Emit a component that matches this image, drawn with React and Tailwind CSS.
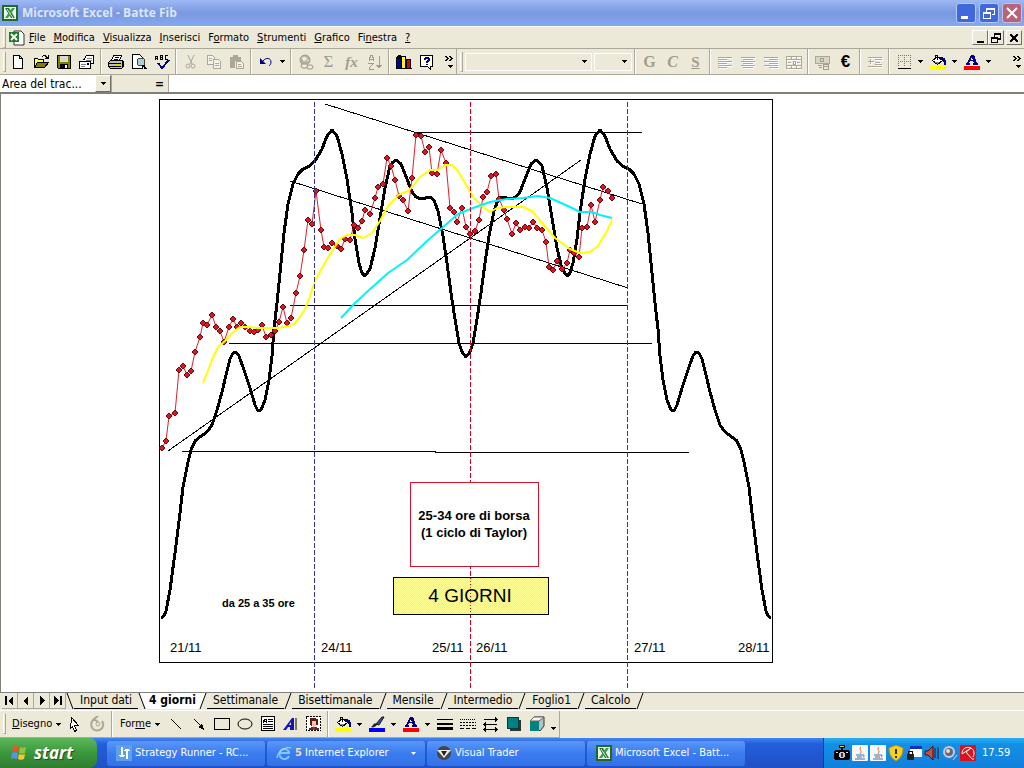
import { clsx } from "clsx";

const MENUS = [
  ["", "F", "ile"],
  ["", "M", "odifica"],
  ["", "V", "isualizza"],
  ["", "I", "nserisci"],
  ["F", "o", "rmato"],
  ["", "S", "trumenti"],
  ["", "G", "rafico"],
  ["Fi", "n", "estra"],
  ["", "?", ""],
];

const SHEETS = ["Input dati", "4 giorni", "Settimanale", "Bisettimanale", "Mensile", "Intermedio", "Foglio1", "Calcolo"];

// Left half of the theoretical cycle; the right half mirrors it
const CYCLE = [
  [161, 618], [164, 616], [166, 611], [170, 590], [175, 553], [180, 513], [183, 487], [188, 462], [191, 450], [195, 441],
  [200, 437], [207, 432], [212, 425], [217, 410], [222, 392], [226, 375], [230, 359], [233, 353], [236, 352], [239, 356],
  [243, 367], [250, 388], [255, 405], [258, 411], [261, 410], [265, 400], [269, 380], [272, 356], [274, 329], [277, 303],
  [280, 273], [284, 233], [288, 204], [293, 184], [298, 174], [303, 169], [308, 167], [315, 161], [322, 149], [327, 136],
  [332, 130], [337, 136], [342, 154], [347, 179], [352, 213], [355, 239], [359, 263], [362, 273], [365, 276], [370, 269],
  [375, 248], [380, 218], [385, 188], [390, 166], [393, 162], [396, 160], [401, 164], [407, 179], [412, 192], [416, 197],
  [421, 199], [430, 197], [434, 200], [438, 211], [443, 236], [447, 263], [451, 293], [455, 319], [459, 343], [462, 352],
  [466, 357],
];

const PRICES = [
  [162, 448], [166, 441], [169, 416], [175, 413], [179, 370], [183, 366], [187, 375], [191, 371], [195, 352], [200, 337],
  [203, 323], [207, 325], [212, 315], [216, 327], [220, 331], [224, 342], [229, 327], [233, 319], [237, 327], [241, 323],
  [245, 327], [250, 331], [254, 332], [258, 330], [262, 325], [266, 337], [271, 335], [275, 331], [279, 322], [283, 307],
  [287, 323], [291, 318], [296, 293], [300, 276], [304, 250], [308, 220], [312, 224], [316, 191], [321, 230], [324, 247],
  [328, 248], [332, 243], [337, 246], [341, 249], [345, 239], [350, 240], [354, 225], [358, 228], [362, 221], [365, 210],
  [370, 214], [375, 198], [378, 187], [383, 184], [387, 158], [391, 166], [395, 180], [399, 196], [403, 200], [408, 211],
  [412, 178], [416, 135], [421, 136], [425, 152], [429, 147], [432, 173], [437, 174], [441, 150], [446, 163], [450, 208],
  [454, 212], [457, 222], [462, 208], [466, 227], [470, 234], [475, 231], [479, 220], [483, 197], [487, 192], [491, 176],
  [496, 174], [499, 199], [504, 210], [507, 219], [512, 234], [516, 223], [520, 230], [525, 227], [529, 228], [533, 222],
  [537, 228], [542, 230], [546, 242], [549, 267], [553, 270], [557, 261], [562, 269], [567, 263], [570, 250], [574, 253],
  [579, 257], [582, 228], [587, 227], [591, 205], [595, 222], [600, 200], [603, 187], [608, 191], [612, 198],
];

const FAST_AVERAGE = [
  [203, 383], [207, 373], [212, 360], [218, 347], [225, 341], [233, 332], [240, 327], [248, 327], [258, 328], [278, 328],
  [290, 326], [295, 323], [300, 317], [305, 309], [310, 296], [315, 281], [322, 268], [332, 251], [340, 239], [347, 235],
  [355, 235], [363, 238], [372, 233], [380, 221], [388, 206], [395, 199], [398, 195], [408, 191], [413, 186], [420, 177],
  [430, 170], [438, 170], [445, 165], [452, 165], [458, 171], [465, 183], [473, 197], [482, 206], [490, 212], [497, 208],
  [507, 207], [523, 207], [532, 211], [543, 224], [555, 238], [570, 249], [580, 253], [590, 252], [598, 246], [607, 231],
  [612, 220],
];

const SLOW_AVERAGE = [
  [341, 318], [355, 303], [368, 291], [388, 273], [407, 260], [427, 241], [442, 228], [458, 214], [473, 208], [490, 202],
  [507, 199], [523, 198], [538, 196], [550, 198], [570, 207], [580, 212], [592, 212], [600, 215], [612, 218],
];

const toPoints = (list) => list.map((p) => p.join(",")).join(" ");
const mirrored = [...CYCLE].reverse().map(([x, y]) => [932 - x, y]);

const Icon = ({ children, smooth, size = 16 }) => (
  <svg width={size} height={size} viewBox="0 0 16 16" fill="none" aria-hidden="true"
    shapeRendering={smooth ? "auto" : "crispEdges"} className="block shrink-0">
    {children}
  </svg>
);

const Tool = ({ label, children }) => (
  <button type="button" aria-label={label} className="flex h-[22px] w-[23px] shrink-0 items-center justify-center">
    {children}
  </button>
);

const Caret = () => (
  <svg width="5" height="3" viewBox="0 0 5 3" shapeRendering="crispEdges" aria-hidden="true" className="block">
    <path d="M0 0h5v1H0zM1 1h3v1H1zM2 2h1v1H2z" fill="#000" />
  </svg>
);

const Drop = ({ label }) => (
  <button type="button" aria-label={label} className="flex h-[22px] w-[11px] shrink-0 items-center justify-center">
    <Caret />
  </button>
);

const Sep = () => (
  <div className="flex h-full w-[6px] shrink-0 justify-center">
    <div className="w-px bg-[#aca899]" />
    <div className="w-px bg-white" />
  </div>
);

const Grip = () => (
  <div className="flex h-full w-[6px] shrink-0 items-center justify-end">
    <div className="h-5 w-[3px] border-r border-b border-[#aca899] border-l border-l-white" />
  </div>
);

const Chevrons = () => (
  <button type="button" aria-label="Altri pulsanti" className="flex h-full w-[18px] shrink-0 flex-col items-end justify-center gap-1 pr-[3px]">
    <svg width="8" height="5" viewBox="0 0 8 5" shapeRendering="crispEdges" aria-hidden="true">
      <path d="M0 0h2v1H0zM1 1h2v1H1zM2 2h2v1H2zM1 3h2v1H1zM0 4h2v1H0zM4 0h2v1H4zM5 1h2v1H5zM6 2h2v1H6zM5 3h2v1H5zM4 4h2v1H4z" fill="#000" />
    </svg>
    <Caret />
  </button>
);

const ExcelIcon = () => (
  <Icon smooth>
    <rect x="0" y="0" width="16" height="16" fill="#1d6b26" />
    <rect x="2" y="2" width="12" height="12" fill="#f2f8f0" />
    <path d="M3 3h4l6 10H9z" fill="#1d7a2c" />
    <path d="M13 3h-3L3 13h3z" fill="#3f9a4a" />
    <path d="M5 4l6 9" stroke="#d8ecd8" />
  </Icon>
);

const BucketIcon = ({ color }) => (
  <Icon>
    <path d="M2.500 6.500l5-4 5 4-5 4z" fill="#fff" stroke="#000" />
    <path d="M5 8h4v1H8v1H7V9H5z" fill="#8a8a80" />
    <path d="M5.500 5V1.500h2V6" stroke="#000" />
    <path d="M10 3h3v1h2v2h1v5h-2V8h-1V6h-2V5h-1z" fill="#000080" />
    <rect x="0" y="12" width="16" height="4" fill={color} />
  </Icon>
);

const FontColorIcon = () => (
  <Icon>
    <path d="M7 1h3l3 8h1v2h-5V9h1l-1-2H6L5 9h1v2H2V9h1zM8 3L7 6h2z" fill="#000080" />
    <rect x="0" y="12" width="16" height="4" fill="#ff0000" />
  </Icon>
);

const AlignIcon = ({ d }) => (
  <Icon>
    <path d={d} stroke="#fff" transform="translate(1 1)" />
    <path d={d} stroke="#aca899" />
  </Icon>
);

const TitleBar = () => (
  <header className="flex h-[26px] items-center bg-linear-to-b from-[#9db9f4] via-[#7b97e0] to-[#82aaf0] pr-[2px] pl-[2px]">
    <ExcelIcon />
    <h1 className="ml-1 flex-1 font-['Open_Sans',sans-serif] text-[12px] leading-4 font-bold text-[#dbe6fa]">Microsoft Excel - Batte Fib</h1>
    <div className="flex gap-[3px]">
      <button type="button" aria-label="Riduci a icona" className="flex size-5 items-center justify-center rounded-[3px] border border-[#b5c8f2] bg-[#3f68dc]">
        <Icon><rect x="3" y="11" width="7" height="3" fill="#fff" /></Icon>
      </button>
      <button type="button" aria-label="Ripristina" className="flex size-5 items-center justify-center rounded-[3px] border border-[#b5c8f2] bg-[#3f68dc]">
        <Icon>
          <path d="M5 3h9v7h-3V9h2V5H6v2H5z" fill="#fff" />
          <path d="M2 7h8v7H2zM3 9v4h6V9z" fill="#fff" fillRule="evenodd" />
        </Icon>
      </button>
      <button type="button" aria-label="Chiudi" className="flex size-5 items-center justify-center rounded-[3px] border border-[#c9bfe0] bg-[#b8637c]">
        <Icon smooth><path d="M3 3l10 10M13 3L3 13" stroke="#fff" strokeWidth="2" /></Icon>
      </button>
    </div>
  </header>
);

const MenuBar = () => (
  <nav className="flex h-[23px] items-center border-t border-b border-t-white border-b-[#aca899]">
    <Grip />
    <div className="ml-[2px] flex w-[17px] justify-center">
      <Icon smooth>
        <path d="M5 1h7l3 3v11H5z" fill="#fff" stroke="#333" />
        <rect x="0" y="2" width="10" height="10" fill="#1d7a2c" />
        <path d="M2 4l6 6M8 4l-6 6" stroke="#fff" strokeWidth="2" />
      </Icon>
    </div>
    <ul className="flex flex-1 gap-2 pl-1 text-[11px] leading-4">
      {MENUS.map(([before, key, after]) => (
        <li key={before + key + after}>
          <button type="button">{before}<span className="underline underline-offset-1">{key}</span>{after}</button>
        </li>
      ))}
    </ul>
    <div className="flex pr-[2px]">
      <button type="button" aria-label="Riduci finestra" className="flex h-[15px] w-4 items-center justify-center border border-white border-r-[#716f64] border-b-[#716f64]">
        <Icon size={12}><rect x="4" y="12" width="9" height="3" fill="#000" /></Icon>
      </button>
      <button type="button" aria-label="Ripristina finestra" className="flex h-[15px] w-4 items-center justify-center border border-white border-r-[#716f64] border-b-[#716f64]">
        <Icon size={12}>
          <path d="M5 1h10v9h-4V8h2V4H7v2H5zM1 6h10v9H1zM3 9v4h6V9z" fill="#000" fillRule="evenodd" />
        </Icon>
      </button>
      <button type="button" aria-label="Chiudi finestra" className="ml-[2px] flex h-[15px] w-4 items-center justify-center border border-white border-r-[#716f64] border-b-[#716f64]">
        <Icon size={12}><path d="M3 3l10 10M13 3L3 13" stroke="#000" strokeWidth="3" /></Icon>
      </button>
    </div>
  </nav>
);

const ToolBar = () => (
  <div className="flex h-[26px] items-center border-b border-[#aca899]">
    <Grip />
    <Tool label="Nuovo"><Icon><path d="M3.5 1.5h6l3 3v10h-9z" fill="#fff" stroke="#000" /><path d="M9.5 1.5v3h3" stroke="#000" /></Icon></Tool>
    <Tool label="Apri">
      <Icon>
        <path d="M1.5 13.5v-9h3l1 1h5v3" fill="#ffff66" stroke="#000" />
        <path d="M1.5 13.5l3-5h11l-4 5z" fill="#808000" stroke="#000" />
        <path d="M9 2h1V1h3v1h1v1h1V1h1v4h-4V4h1V3h-1V2h-2v1H9z" fill="#000" />
      </Icon>
    </Tool>
    <Tool label="Salva">
      <Icon>
        <path d="M1.5 1.5h13v13h-12l-1-1z" fill="#808000" stroke="#000" />
        <rect x="4" y="2" width="8" height="6" fill="#d8d8d0" />
        <rect x="4" y="10" width="8" height="5" fill="#000" />
        <rect x="9" y="11" width="2" height="3" fill="#fff" />
      </Icon>
    </Tool>
    <Tool label="Posta elettronica">
      <Icon>
        <path d="M4.500 6.500l3-5h7v8h-3" fill="#fff" stroke="#000" />
        <path d="M8 4h5M7 6h6" stroke="#808080" />
        <path d="M0.500 7.500h11v7h-11z" fill="#fff" stroke="#000" />
        <path d="M2 10h5M2 12h4" stroke="#808080" />
        <rect x="8" y="9" width="2" height="2" fill="#000" />
      </Icon>
    </Tool>
    <Sep />
    <Tool label="Stampa">
      <Icon>
        <path d="M5.500 1.500h8l-2 5h-8z" fill="#fff" stroke="#000" />
        <path d="M7 3h4M6 5h4" stroke="#000" />
        <path d="M0.500 8.500l2-2h12l1 2v4l-2 2h-11l-2-2z" fill="#c0c0b0" stroke="#000" />
        <path d="M1 9h12M1 12h12M14 8v5" stroke="#000" />
        <rect x="8" y="10" width="3" height="1" fill="#e0e000" />
      </Icon>
    </Tool>
    <Tool label="Anteprima di stampa">
      <Icon>
        <path d="M1.500 0.500h7l3 3v11h-10z" fill="#fff" stroke="#000" />
        <circle cx="10" cy="8" r="4" fill="#a8d0d8" stroke="#444" />
        <path d="M12 11l3 4" stroke="#000" strokeWidth="2" />
      </Icon>
    </Tool>
    <Tool label="Controllo ortografia">
      <Icon>
        <path d="M1.500 6V2.500h2V6M1 4.500h3M6.500 1v4.500h2v-4h-2M6 3.500h3M13.500 1.500h-2v4h2" stroke="#000" />
        <path d="M4 9l4 5 7-8" stroke="#000080" strokeWidth="2" />
      </Icon>
    </Tool>
    <Sep />
    <Tool label="Taglia">
      <Icon smooth>
        <path d="M5 1l4 9M11 1L7 10" stroke="#aca899" />
        <circle cx="5" cy="12" r="2" stroke="#aca899" /><circle cx="10" cy="12" r="2" stroke="#aca899" />
      </Icon>
    </Tool>
    <Tool label="Copia">
      <Icon>
        <path d="M1.500 1.500h5l2 2v7h-7z" fill="#f4f2e8" stroke="#aca899" />
        <path d="M7.500 5.500h5l2 2v7h-7z" fill="#f4f2e8" stroke="#aca899" />
        <path d="M3 4h3M3 6h3M9 9h4M9 11h4" stroke="#aca899" />
      </Icon>
    </Tool>
    <Tool label="Incolla">
      <Icon>
        <path d="M1 3h3V1h5v2h3v4H6v7H1z" fill="#aca899" />
        <path d="M7.500 7.500h5l2 2v5h-7z" fill="#f4f2e8" stroke="#aca899" />
        <path d="M9 10h3M9 12h4" stroke="#aca899" />
      </Icon>
    </Tool>
    <Sep />
    <Tool label="Annulla">
      <Icon smooth>
        <path d="M2 4v6h6z" fill="#000080" />
        <path d="M5 7c3-4 8-3 8 1 0 2-1 3-2 4" stroke="#000080" />
      </Icon>
    </Tool>
    <Drop label="Elenco annulla" />
    <Sep />
    <Tool label="Collegamento ipertestuale">
      <Icon smooth>
        <circle cx="7" cy="6" r="5" fill="#b5b1a3" stroke="#a09d8e" />
        <path d="M4 4l3-1 2 2-3 2zM9 7l2-1" fill="#ece9d8" stroke="#ece9d8" />
        <rect x="3" y="10" width="7" height="4" rx="2" fill="#ece9d8" stroke="#9a9788" />
        <rect x="9" y="11" width="6" height="4" rx="2" fill="#ece9d8" stroke="#9a9788" />
      </Icon>
    </Tool>
    <Tool label="Somma automatica"><span className="font-['Liberation_Serif',serif] text-[17px] leading-4 text-[#a09d8e]">Σ</span></Tool>
    <Tool label="Incolla funzione"><span className="font-['Liberation_Serif',serif] text-[15px] leading-4 font-bold text-[#a09d8e] italic">fx</span></Tool>
    <Tool label="Ordinamento crescente">
      <Icon>
        <path d="M2 7V3h1V1h2v2h1v4M2 5h4M1 9h5v1L2 14v1h5" stroke="#a09d8e" />
        <path d="M12 2v12M9 11h6M10 12h4M11 13h2" stroke="#a09d8e" />
      </Icon>
    </Tool>
    <Sep />
    <Tool label="Creazione guidata Grafico">
      <Icon>
        <path d="M0 4l2-3h3v14H0z" fill="#000" />
        <rect x="1" y="5" width="4" height="10" fill="#0000a0" />
        <path d="M5.500 2.500h4v12h-4z" fill="#ffff00" stroke="#000" />
        <path d="M10.500 5.500h4v9h-4z" fill="#e00000" stroke="#000" />
        <path d="M0 14h16v1H0z" fill="#000" />
      </Icon>
    </Tool>
    <Tool label="Guida">
      <Icon>
        <path d="M1.500 1.500h12v11h-2v3l-3-3h-7z" fill="#ffffe8" stroke="#000" />
        <path d="M5 4h1V3h4v1h1v3h-1v1H9v1H7V7h1V6h1V5H7v1H5zM7 10h2v1H7z" fill="#000080" />
      </Icon>
    </Tool>
    <Chevrons />
    <div className="h-full w-px bg-[#aca899]" />
    <Grip />
    <label className="ml-[2px] flex h-[18px] w-[127px] items-center border border-white pr-1">
      <select aria-label="Tipo di carattere" disabled className="h-full min-w-0 flex-1 appearance-none"><option></option></select>
      <Caret />
    </label>
    <label className="ml-[2px] flex h-[18px] w-[38px] items-center border border-white pr-1">
      <select aria-label="Dimensione carattere" disabled className="h-full min-w-0 flex-1 appearance-none"><option></option></select>
      <Caret />
    </label>
    <Sep />
    <Tool label="Grassetto"><span className="font-['Liberation_Serif',serif] text-[16px] leading-4 font-bold text-[#a09d8e]">G</span></Tool>
    <Tool label="Corsivo"><span className="font-['Liberation_Serif',serif] text-[16px] leading-4 font-bold text-[#a09d8e] italic">C</span></Tool>
    <Tool label="Sottolineato"><span className="font-['Liberation_Serif',serif] text-[15px] leading-4 font-bold text-[#a09d8e] underline">S</span></Tool>
    <Sep />
    <Tool label="Allinea a sinistra"><AlignIcon d="M1 3.500h14M1 5.500h9M1 7.500h14M1 9.500h9M1 11.500h14M1 13.500h9" /></Tool>
    <Tool label="Centra"><AlignIcon d="M1 3.500h14M3 5.500h10M1 7.500h14M3 9.500h10M1 11.500h14M3 13.500h10" /></Tool>
    <Tool label="Allinea a destra"><AlignIcon d="M1 3.500h14M6 5.500h9M1 7.500h14M6 9.500h9M1 11.500h14M6 13.500h9" /></Tool>
    <Tool label="Unisci e centra">
      <AlignIcon d="M0.500 2.500h15v12h-15zM0 5.500h16M0 11.500h16M5.500 2v3M10.500 2v3M5.500 11v4M10.500 11v4M2 8.500h3M11 8.500h3M7 7.500h2v3h-2z" />
    </Tool>
    <Sep />
    <Tool label="Stile valuta">
      <Icon>
        <path d="M0.500 2.500h14v7h-14z" fill="#d8d4c6" stroke="#aca899" />
        <circle cx="7" cy="6" r="2" stroke="#a09d8e" />
        <path d="M8 10h5v5H8zM8 12h5M3 11h4M4 13h3" stroke="#a09d8e" />
      </Icon>
    </Tool>
    <Tool label="Euro"><span className="font-['Liberation_Sans',sans-serif] text-[17px] leading-4 font-bold">€</span></Tool>
    <Sep />
    <Tool label="Riduci rientro"><AlignIcon d="M1 3.500h14M8 5.500h7M8 8.500h5M1 12.500h14M8 10.500h7M1 7.500h6M3 5v5" /></Tool>
    <Sep />
    <Tool label="Bordi">
      <Icon>
        <path d="M2.500 1v12M8.500 1v12M14.500 1v12M2 1.500h13M2 7.500h13" stroke="#777" strokeDasharray="1 1" />
        <path d="M2 14.500h13" stroke="#000" />
      </Icon>
    </Tool>
    <Drop label="Elenco bordi" />
    <Tool label="Colore riempimento"><BucketIcon color="#ffff00" /></Tool>
    <Drop label="Elenco colori riempimento" />
    <Tool label="Colore carattere"><FontColorIcon /></Tool>
    <Drop label="Elenco colori carattere" />
    <div className="flex-1" />
    <Chevrons />
  </div>
);

const FormulaBar = () => (
  <div className="flex h-[17px] bg-white">
    <label className="flex w-[112px] border-r border-[#aca899]">
      <select aria-label="Casella nome" className="min-w-0 flex-1 appearance-none pl-[2px] text-[12px] leading-4">
        <option>Area del trac...</option>
      </select>
      <span className="flex w-4 items-center justify-center border border-white border-r-[#716f64] border-b-[#716f64] bg-[#ece9d8]"><Caret /></span>
    </label>
    <div className="flex w-[57px] justify-end border-r border-[#aca899] bg-[#ece9d8] pr-1">
      <button type="button" aria-label="Modifica formula" className="text-[12px] leading-4 font-bold">=</button>
    </div>
    <input type="text" aria-label="Barra della formula" className="min-w-0 flex-1 bg-white px-1 text-[12px] outline-none" />
  </div>
);

const Chart = () => (
  <svg viewBox="158 94 620 597" width="620" height="597" role="img" aria-label="Grafico 4 giorni" className="ml-[157px] block">
    <defs>
      <pattern id="dither" width="2" height="2" patternUnits="userSpaceOnUse">
        <rect width="2" height="2" fill="#f6f65c" />
        <rect width="1" height="1" fill="#ffff94" />
        <rect x="1" y="1" width="1" height="1" fill="#ffff94" />
      </pattern>
    </defs>
    <g fill="none" shapeRendering="crispEdges">
      <rect x="159.500" y="99.500" width="613" height="563" stroke="#000" />
      <g stroke="#000">
        <path d="M416 132.500H642M290 305.500H628M229 343.500H652M182 451.500H436M435 452.500H689" />
        <path d="M325 104L642 204M290 181L628 288M168 451L581 160" />
      </g>
    </g>
    <g fill="none" strokeLinejoin="round">
      <polyline points={toPoints([...CYCLE, ...mirrored])} stroke="#000" strokeWidth="3" shapeRendering="crispEdges" />
      <polyline points={toPoints(PRICES)} stroke="#e0202c" />
      {PRICES.map(([x, y]) => (
        <path key={x} d={`M${x} ${y - 3}l3 3-3 3-3-3z`} fill="#e0141e" stroke="#5a0c10" strokeLinejoin="miter" />
      ))}
      <polyline points={toPoints(FAST_AVERAGE)} stroke="#ffff00" strokeWidth="2" />
      <polyline points={toPoints(SLOW_AVERAGE)} stroke="#00f4f8" strokeWidth="2" />
    </g>
    <g shapeRendering="crispEdges" fill="none" strokeDasharray="5 2">
      <path d="M314.500 102V688M627.500 102V688" stroke="#33339a" />
      <path d="M470.500 102V688" stroke="#d00020" />
    </g>
    <g shapeRendering="crispEdges">
      <rect x="410.500" y="482.500" width="128" height="84" fill="#fff" stroke="#d8142c" />
      <rect x="393.500" y="577.500" width="155" height="37" fill="url(#dither)" stroke="#000" />
      <path d="M470.500 578V614" stroke="#d00020" strokeDasharray="1 2" />
    </g>
    <g fontFamily="'Liberation Sans', Arial, sans-serif" fill="#000">
      <text x="474" y="520" textAnchor="middle" fontSize="13" fontWeight="bold">25-34 ore di borsa</text>
      <text x="474" y="537" textAnchor="middle" fontSize="13" fontWeight="bold">(1 ciclo di Taylor)</text>
      <text x="470" y="602" textAnchor="middle" fontSize="19">4 GIORNI</text>
      <text x="222" y="607" fontSize="11" fontWeight="bold">da 25 a 35 ore</text>
      <g fontSize="13">
        <text x="170" y="652">21/11</text>
        <text x="321" y="652">24/11</text>
        <text x="432" y="652">25/11</text>
        <text x="476" y="652">26/11</text>
        <text x="634" y="652">27/11</text>
        <text x="738" y="652">28/11</text>
      </g>
    </g>
  </svg>
);

const NAV = [
  ["Primo foglio", "M3 3h2v9H3zM11 3v9L6 8z"],
  ["Foglio precedente", "M10 3v9L5 8z"],
  ["Foglio successivo", "M6 3v9l5-4z"],
  ["Ultimo foglio", "M4 3v9l5-4zM10 3h2v9h-2z"],
];

const TabEdge = ({ back, fill = "#ece9d8" }) => (
  <svg width="8" height="16" viewBox="0 0 8 16" aria-hidden="true" className="block shrink-0">
    {back
      ? <><path d="M0 0h8v16L1 0z" fill={fill} /><path d="M1 0l6 16" stroke="#000" /></>
      : <><path d="M0 0h7L1 16H0z" fill={fill} /><path d="M7 0L1 16" stroke="#000" /></>}
  </svg>
);

const SheetTabs = () => (
  <div className="flex h-[18px] border-t border-[#808080] pb-px pl-[2px]">
    {NAV.map(([label, d]) => (
      <button key={label} type="button" aria-label={label} className="flex w-4 items-center justify-center border-r border-b border-[#aca899]">
        <Icon><path d={d} fill="#000" /></Icon>
      </button>
    ))}
    <TabEdge back />
    {SHEETS.map((name, i) => (
      <div key={name} className="flex">
        <button type="button"
          className={clsx("border-b text-[12px] leading-[15px]",
            i === 1 ? "border-white bg-white px-[3px] font-bold" : "border-black px-[6px]")}>
          {name}
        </button>
        <TabEdge back={i === 0} fill={i === 0 || i === 1 ? "#fff" : "#ece9d8"} />
      </div>
    ))}
  </div>
);

const DrawBar = () => (
  <div className="flex h-[28px] border-t border-white">
    <div className="flex items-center border-r border-b border-[#aca899] text-[11px]">
      <Grip />
      <button type="button" className="flex w-[57px] items-center gap-1 pl-[6px]"><span><u>D</u>isegno</span><Caret /></button>
      <Tool label="Selezione oggetti"><Icon><path d="M4.500 1.500l7 8h-4l2 5-2 1-2-5-2 2z" fill="#fff" stroke="#000" /></Icon></Tool>
      <Tool label="Rotazione libera">
        <Icon smooth><path d="M5 3a6 6 0 1 0 7 2M8 6l-4-3 4-3" stroke="#aca899" strokeWidth="2" /><circle cx="8" cy="8" r="2" stroke="#aca899" /></Icon>
      </Tool>
      <Sep />
      <button type="button" className="flex w-[49px] items-center gap-1 pl-[5px]"><span>For<u>m</u>e</span><Caret /></button>
      <Tool label="Linea"><Icon><path d="M3 3l10 10" stroke="#000" /></Icon></Tool>
      <Tool label="Freccia"><Icon><path d="M3 3l8 8" stroke="#000" /><path d="M13 14l-6-3 4-4z" fill="#000" /></Icon></Tool>
      <Tool label="Rettangolo"><Icon><path d="M0.500 2.500h15v11h-15z" stroke="#000" /></Icon></Tool>
      <Tool label="Ovale"><Icon smooth><ellipse cx="8" cy="8" rx="7" ry="5" stroke="#000" /></Icon></Tool>
      <Tool label="Casella di testo">
        <Icon>
          <path d="M1.500 0.500h13v14h-13z" fill="#fff" stroke="#000" />
          <path d="M3 6.500V4h1V3h2v4M3 5.500h3M8 3.500h5M8 5.500h5M3 8.500h10M3 10.500h10M3 12.500h10" stroke="#000" />
        </Icon>
      </Tool>
      <Tool label="WordArt">
        <Icon smooth><path d="M0 14l9-12h2v12H7v-3H5l-2 3zM6 9h2V6z" fill="#1414b4" fillRule="evenodd" /><path d="M12 2h2v12h-2z" fill="#77776c" /></Icon>
      </Tool>
      <Tool label="ClipArt">
        <Icon>
          <path d="M0.500 0.500h14v14h-14z" fill="#fff" stroke="#000" strokeDasharray="2 1" />
          <path d="M4 2h6v1h2v6h-2v1H5V9H4z" fill="#5c1c14" />
          <path d="M6 5h4v5H9v1H7v-1H6z" fill="#f4c4ac" />
          <path d="M3 12h2v-1h6v1h2v2H3z" fill="#483030" />
          <path d="M7 11h2v3H7z" fill="#c02030" />
        </Icon>
      </Tool>
      <Sep />
      <Tool label="Colore riempimento forma"><BucketIcon color="#ffff00" /></Tool>
      <Drop label="Elenco riempimento forma" />
      <Tool label="Colore linea">
        <Icon smooth>
          <path d="M2 11c2-1 2-3 4-4l2 2c-2 2-4 3-6 2z" fill="#222" /><path d="M7 8l6-7h2l-5 8z" fill="#3050b0" stroke="#111" />
          <rect x="0" y="12" width="16" height="4" fill="#0000ff" />
        </Icon>
      </Tool>
      <Drop label="Elenco colori linea" />
      <Tool label="Colore testo"><FontColorIcon /></Tool>
      <Drop label="Elenco colori testo" />
      <Tool label="Stile linea"><Icon><path d="M0 3h16v1H0zM0 7h16v2H0zM0 11h16v3H0z" fill="#000" /></Icon></Tool>
      <Tool label="Stile tratteggio">
        <Icon><path d="M0 3.500h16" stroke="#000" strokeDasharray="1 1" /><path d="M0 6.500h16M0 9.500h16" stroke="#000" strokeDasharray="2 1" /><path d="M0 12.500h16" stroke="#000" strokeDasharray="4 2" /></Icon>
      </Tool>
      <Tool label="Stile freccia">
        <Icon>
          <path d="M1 3.500h13M1 8.500h13M1 13.500h13" stroke="#000" />
          <path d="M15 3h-1V2h-1V1h-1v5h1V5h1V4h1zM0 8h1V7h1V6h1v5H2v-1H1V9H0zM15 13h-1v-1h-1v-1h-1v5h1v-1h1v-1h1zM0 13h1v-1h1v-1h1v5H2v-1H1v-1H0z" fill="#000" />
        </Icon>
      </Tool>
      <Tool label="Ombreggiatura"><Icon><path d="M4 4h11v11H4z" fill="#333" /><path d="M1.500 1.500h11v11h-11z" fill="#008080" stroke="#003c3c" /></Icon></Tool>
      <Tool label="3D">
        <Icon smooth><path d="M1 5l4-4h10v9l-4 5z" fill="#aac4c4" stroke="#333" /><path d="M1 5h9v10H1z" fill="#008080" /><path d="M1 5l4-4h10l-5 4z" fill="#f4f4f0" stroke="#666" /></Icon>
      </Tool>
      <div className="pt-2"><Drop label="Altri pulsanti disegno" /></div>
    </div>
  </div>
);

const Task = ({ icon, children, grouped }) => (
  <button type="button" className="flex h-[25px] max-w-[158px] min-w-0 flex-1 items-center gap-[3px] rounded-[3px] bg-linear-to-b from-[#5a97f7] via-[#3a7cf0] to-[#3372e6] px-[9px] text-left text-[11px] text-white">
    {icon}
    <span className="flex-1 truncate">{children}</span>
    {grouped && <svg width="5" height="3" viewBox="0 0 5 3" aria-hidden="true"><path d="M0 0h5L2.500 3z" fill="#fff" /></svg>}
  </button>
);

const JavaIcon = () => (
  <Icon smooth>
    <rect width="16" height="16" rx="1" fill="#f6f8fc" />
    <path d="M9 2c-3 3 2 3-1 7" stroke="#e07020" />
    <path d="M4 10h7M5 12h5M3 14h10M11 10c2 0 1 2 0 2" stroke="#4a6a98" />
  </Icon>
);

const TaskBar = () => (
  <footer className="flex h-[30px] items-center bg-linear-to-b from-[#3f86f4] via-[#245edb] via-20% to-[#2050c4]">
    <button type="button" className="flex h-[30px] w-[97px] items-center gap-[6px] rounded-r-lg bg-linear-to-b from-[#5cb85a] via-[#3a983a] to-[#2f7d30] pl-[10px] text-white">
      <svg width="18" height="18" viewBox="0 0 18 18" aria-hidden="true">
        <path d="M3 3c2-2 4-1 6 0L8 8C6 7 4 7 2 8z" fill="#e8562a" />
        <path d="M10 3c2 1 4 1 6 0l-1 6c-2 1-4 1-6 0z" fill="#8cc63c" />
        <path d="M2 9c2-1 4-1 6 0l-1 6c-2-1-4-1-6 0z" fill="#5a90f0" />
        <path d="M9 10c2 1 4 1 6 0l-1 5c-2 1-4 1-6 0z" fill="#f8c830" />
      </svg>
      <span className="font-['Open_Sans',sans-serif] text-[17px] leading-5 font-bold italic [text-shadow:1px_1px_1px_#1c4a1c]">start</span>
    </button>
    <div className="ml-[10px] flex min-w-0 flex-1 gap-[2px]">
      <Task icon={<Icon><rect width="16" height="16" fill="#5da0e8" /><path d="M5 2h2v10H5zM3 10h6v1H3zM4 11h4v1H4zM10 4h2v10h-2zM8 5h6v1H8zM9 4h4v1H9z" fill="#fff" /></Icon>}>Strategy Runner - RC...</Task>
      <Task grouped icon={<Icon smooth><path d="M13 11a5 5 0 1 1 0-4v1H4" stroke="#7cc8ff" strokeWidth="2" /><path d="M1 13C1 7 9 1 15 3" stroke="#b8e4ff" /></Icon>}><b className="text-[#f8d8a8]">5</b> Internet Explorer</Task>
      <Task icon={<Icon smooth><circle cx="8" cy="8" r="7" fill="#444" /><path d="M1 5h14l-7 8z" fill="#eee" /><path d="M5 6h6l-3 5z" fill="#222" /></Icon>}>Visual Trader</Task>
      <Task icon={<ExcelIcon />}>Microsoft Excel - Batt...</Task>
    </div>
    <div className="flex h-full w-[201px] items-center gap-[2px] border-l border-[#0c3f9c] bg-linear-to-b from-[#27b0f4] via-[#1290e6] via-20% to-[#1280dc] pl-[10px] text-[11px] text-white">
      <Icon>
        <path d="M5 0h6v3H5z" fill="#000" /><path d="M6 1h4v1H6z" fill="#e8d040" />
        <path d="M7 3h2v2h6v1h1v8h-1v1H1v-1H0V6h1V5h6z" fill="#000" />
        <path d="M6 7h4v1h1v4h-1v1H6v-1H5V8h1z" fill="#c8c8c8" /><path d="M7 8h2v4H7z" fill="#335" />
        <path d="M2 7h2v1H2zM12 7h2v1h-2z" fill="#ddd" />
      </Icon>
      <JavaIcon />
      <JavaIcon />
      <Icon smooth><path d="M8 0l7 3c0 6-2 10-7 13C3 13 1 9 1 3z" fill="#f4d020" stroke="#b89010" /><path d="M7 4h2v5H7zM7 11h2v2H7z" fill="#333" /></Icon>
      <Icon><rect x="4" y="1" width="12" height="11" fill="#fff" /><rect x="4" y="1" width="12" height="3" fill="#1430c0" /><path d="M2 9V6h4v3" stroke="#000" /><rect x="1" y="9" width="7" height="6" fill="#222" /></Icon>
      <Icon smooth><path d="M1 6h3l5-5v14l-5-5H1z" fill="#c85040" stroke="#401010" /><path d="M11 3v10M14 2v12" stroke="#401010" /></Icon>
      <Icon smooth><circle cx="7" cy="7" r="5" fill="#667" stroke="#ccd" strokeWidth="2" /><circle cx="6" cy="6" r="2" fill="#dde" /><path d="M11 15l4-5" stroke="#cde" /></Icon>
      <Icon smooth>
        <rect width="16" height="16" fill="#d81420" />
        <path d="M2 9C2 4 6 1 11 3L2 9zM11 3c3 2 4 5 2 9M11 3L6 7l6 7h2" stroke="#fff" />
      </Icon>
      <time className="ml-1">17.59</time>
    </div>
  </footer>
);

export default function App() {
  return (
    <div className="flex min-h-screen flex-col bg-[#ece9d8] font-['DejaVu_Sans_Condensed','DejaVu_Sans',sans-serif] text-black">
      <TitleBar />
      <MenuBar />
      <ToolBar />
      <FormulaBar />
      <main className="flex-1 border-t-2 border-l border-t-[#808078] border-l-[#808078] bg-white">
        <Chart />
      </main>
      <SheetTabs />
      <DrawBar />
      <TaskBar />
    </div>
  );
}
